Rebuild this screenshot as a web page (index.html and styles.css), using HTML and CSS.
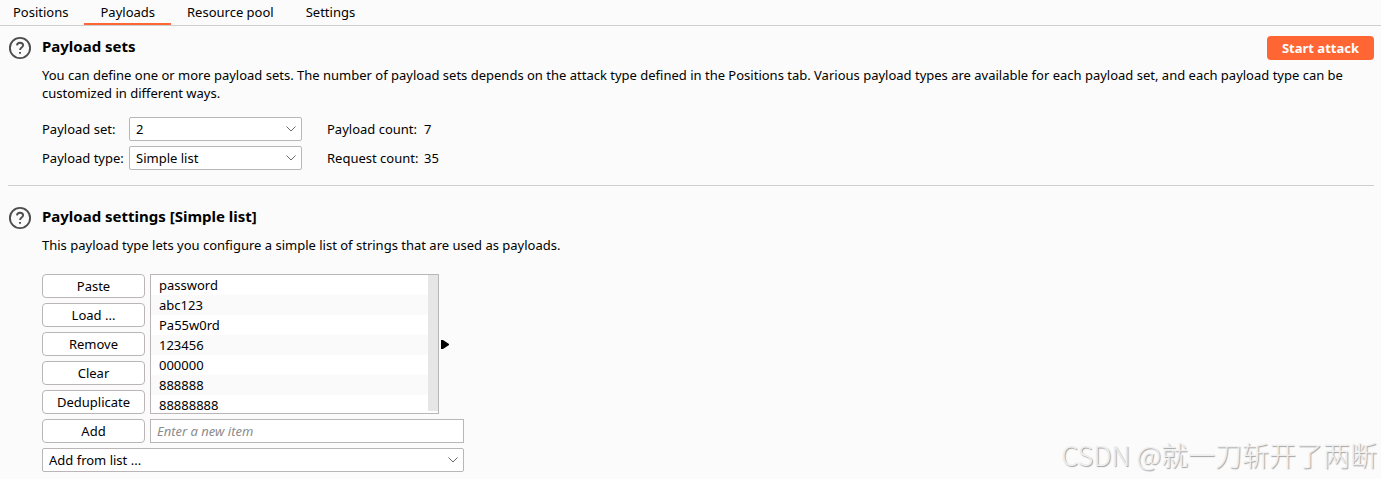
FILE: index.html
```html
<!DOCTYPE html>
<html lang="en">
<head>
<meta charset="utf-8">
<title>Payloads</title>
<link rel="stylesheet" href="styles.css">
</head>
<body>
<nav class="tabs">
  <button class="tab" type="button">Positions</button>
  <button class="tab tab-active" type="button">Payloads</button>
  <button class="tab" type="button">Resource pool</button>
  <button class="tab" type="button">Settings</button>
</nav>
<main class="content">
  <section class="panel panel-sets">
    <svg class="help" viewBox="0 0 24 24" aria-hidden="true"><circle cx="12" cy="12" r="10.1"/><path d="M8.9 9.4c.2-1.7 1.4-2.7 3.1-2.7s3.1 1 3.1 2.6c0 2.3-3 2.3-3 4.7"/><path d="M12 16.1v1.6"/></svg>
    <div class="panel-body">
      <header class="panel-head">
        <h2 class="title">Payload sets</h2>
        <button class="start" type="button">Start attack</button>
      </header>
      <p class="text">You can define one or more payload sets. The number of payload sets depends on the attack type defined in the Positions tab. Various payload types are available for each payload set, and each payload type can be customized in different ways.</p>
      <div class="fields">
        <label for="set">Payload set:</label>
        <span class="combo"><select id="set"><option>2</option></select><svg class="chevron" viewBox="0 0 10 6" aria-hidden="true"><path d="M.5.5 5 5 9.5.5"/></svg></span>
        <span class="count-label">Payload count:</span><span>7</span>
        <label for="type">Payload type:</label>
        <span class="combo"><select id="type"><option>Simple list</option></select><svg class="chevron" viewBox="0 0 10 6" aria-hidden="true"><path d="M.5.5 5 5 9.5.5"/></svg></span>
        <span class="count-label">Request count:</span><span>35</span>
      </div>
    </div>
  </section>
  <section class="panel">
    <svg class="help" viewBox="0 0 24 24" aria-hidden="true"><circle cx="12" cy="12" r="10.1"/><path d="M8.9 9.4c.2-1.7 1.4-2.7 3.1-2.7s3.1 1 3.1 2.6c0 2.3-3 2.3-3 4.7"/><path d="M12 16.1v1.6"/></svg>
    <div class="panel-body">
      <header class="panel-head">
        <h2 class="title">Payload settings [Simple list]</h2>
      </header>
      <p class="text">This payload type lets you configure a simple list of strings that are used as payloads.</p>
      <div class="editor">
        <div class="actions">
          <button class="btn" type="button">Paste</button>
          <button class="btn" type="button">Load ...</button>
          <button class="btn" type="button">Remove</button>
          <button class="btn" type="button">Clear</button>
          <button class="btn" type="button">Deduplicate</button>
        </div>
        <div class="list-row">
          <div class="list">
            <ul class="items">
              <li>password</li>
              <li>abc123</li>
              <li>Pa55w0rd</li>
              <li>123456</li>
              <li>000000</li>
              <li>888888</li>
              <li>88888888</li>
            </ul>
            <div class="track"></div>
          </div>
          <svg class="arrow" viewBox="0 0 8 9" aria-hidden="true"><path d="M0 0h2l6 4v1L2 9H0z"/></svg>
        </div>
        <button class="btn" type="button">Add</button>
        <input class="entry" type="text" placeholder="Enter a new item" aria-label="New item">
        <span class="combo combo-wide"><select aria-label="Add from list"><option>Add from list ...</option></select><svg class="chevron" viewBox="0 0 10 6" aria-hidden="true"><path d="M.5.5 5 5 9.5.5"/></svg></span>
      </div>
    </div>
  </section>
</main>
<div class="watermark">CSDN @就一刀斩开了两断</div>
</body>
</html>
```
FILE: styles.css
```css
* { box-sizing: border-box; }
body {
  margin: 0;
  background: #fbfbfb;
  color: #000;
  font: 13px/18px "Noto Sans", "Open Sans", sans-serif;
}
button, select, input { font: inherit; color: inherit; }
.tabs {
  display: flex;
  border-bottom: 1px solid #cfcfcf;
}
.tab {
  height: 25px;
  padding: 0 16px;
  border: 0;
  border-bottom: 2px solid transparent;
  background: none;
}
.tab:first-child { padding-left: 13px; }
.tab-active { border-bottom-color: #ff6633; }
.content { padding: 0 7px 0 8px; }
.panel {
  display: flex;
  gap: 10px;
  padding-top: 10px;
}
.panel-sets {
  padding-bottom: 15px;
  border-bottom: 1px solid #cfcfcf;
  margin-bottom: 10px;
}
.panel-body { flex: 1; }
.help {
  width: 24px;
  height: 24px;
  flex: none;
  fill: none;
  stroke: #4d4d4d;
  stroke-width: 1.9;
}
.panel-head {
  display: flex;
  justify-content: space-between;
  align-items: flex-start;
  height: 24px;
}
.title { margin: 0; font-size: 15px; line-height: 20px; }
.start {
  height: 24px;
  padding: 0 15px;
  border: 0;
  border-radius: 4px;
  background: #ff6633;
  color: #fff;
  font-weight: bold;
}
.text { margin: 6px 0 0; }
.fields {
  display: grid;
  grid-template-columns: 87px 173px 122px auto;
  justify-content: start;
  align-items: center;
  row-gap: 5px;
  margin-top: 15px;
}
.count-label { padding-left: 25px; }
.combo { display: grid; align-items: center; }
.combo select {
  grid-area: 1 / 1;
  width: 100%;
  height: 24px;
  padding: 0 6px;
  border: 1px solid #bab6b8;
  border-radius: 2px;
  background: #fff;
  appearance: none;
}
.chevron {
  grid-area: 1 / 1;
  justify-self: end;
  width: 10px;
  height: 6px;
  margin-right: 6px;
  fill: none;
  stroke: #6a6a6a;
  pointer-events: none;
}
.editor {
  display: grid;
  grid-template-columns: 103px 314px;
  gap: 5px;
  margin-top: 20px;
}
.actions { display: grid; gap: 5px; }
.btn {
  height: 24px;
  padding: 0;
  border: 1px solid #bab6b8;
  border-radius: 4px;
  background: #fff;
}
.list-row { display: flex; align-items: center; gap: 2px; }
.list {
  display: flex;
  width: 289px;
  height: 140px;
  border: 1px solid #bab6b8;
  background: #fff;
  overflow: hidden;
}
.items { flex: 1; margin: 0; padding: 0; list-style: none; }
.items li { padding-left: 8px; line-height: 20px; }
.items li:nth-child(even) { background: #fafafa; }
.track { width: 10px; margin-bottom: 2px; background: #e6e6e6; }
.arrow { width: 8px; height: 9px; }
.entry {
  width: 100%;
  height: 24px;
  padding: 0 6px;
  border: 1px solid #bab6b8;
  background: #fff;
}
.entry::placeholder { color: #8c8c8c; font-style: italic; }
.combo-wide { grid-column: 1 / -1; }
.watermark {
  position: absolute;
  right: 4px;
  bottom: 5px;
  color: #efefef;
  font: 300 27px/38px "Noto Sans CJK SC", sans-serif;
  text-shadow: 1px 1px 1px #a0a0a0;
  white-space: nowrap;
  pointer-events: none;
}
```
